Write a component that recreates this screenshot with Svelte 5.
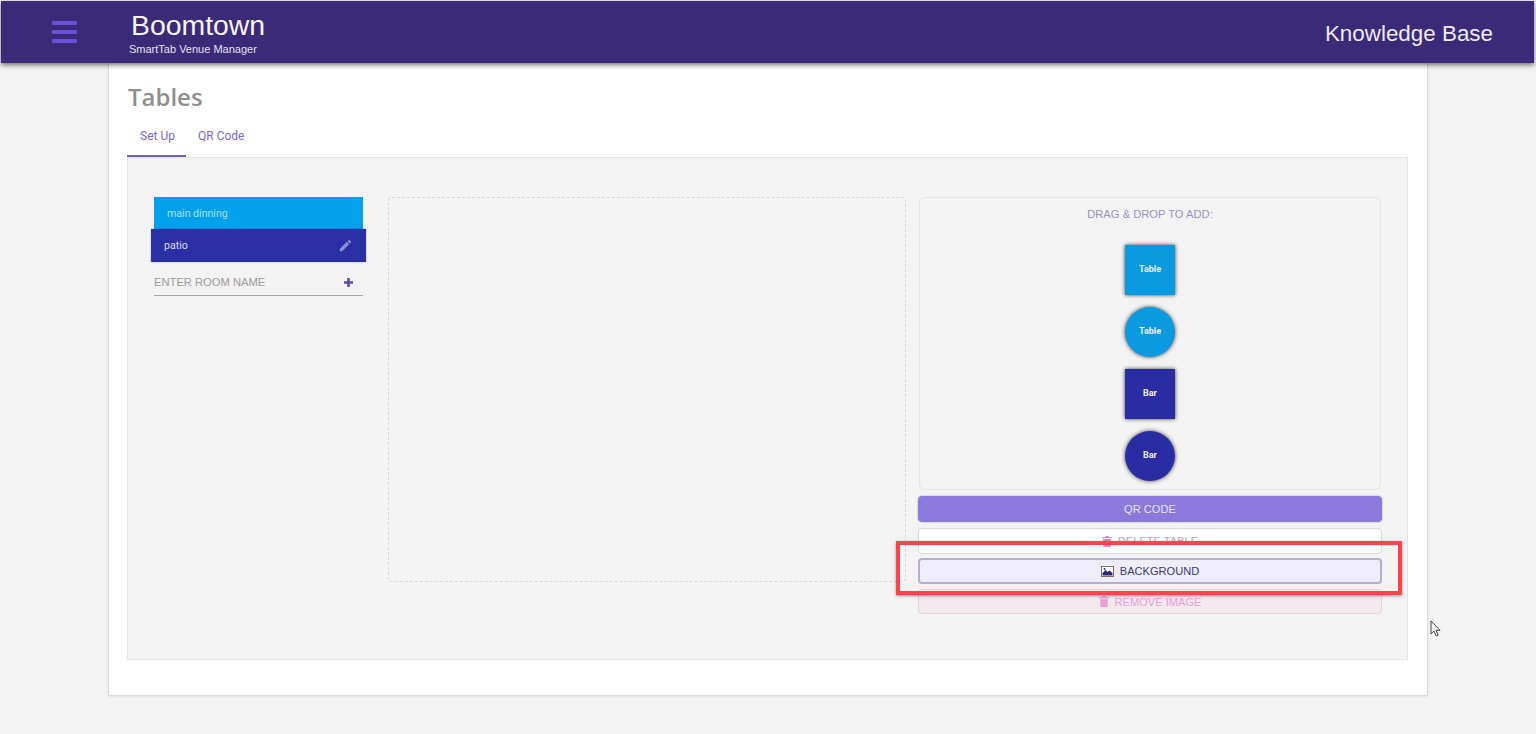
<script>
  const shapes = [
    { label: 'Table', cls: 'table' },
    { label: 'Table', cls: 'table round' },
    { label: 'Bar', cls: 'bar' },
    { label: 'Bar', cls: 'bar round' }
  ];
</script>

<div class="page">
  <header class="topbar">
    <button class="menu" aria-label="Menu"><span></span><span></span><span></span></button>
    <div class="brand">
      <div class="name">Boomtown</div>
      <div class="sub">SmartTab Venue Manager</div>
    </div>
    <div class="kb">Knowledge Base</div>
  </header>

  <main class="card">
    <h1>Tables</h1>
    <nav class="tabs">
      <div class="tab active">Set Up</div>
      <div class="tab">QR Code</div>
    </nav>
    <section class="panel">
      <div class="rooms">
        <div class="room main">main dinning</div>
        <div class="room patio">
          <span>patio</span>
          <svg width="15" height="15" viewBox="0 0 24 24" fill="#8f90d2"><path d="M3 17.25V21h3.75L17.81 9.94l-3.75-3.75L3 17.25zM20.71 7.04a1 1 0 0 0 0-1.41l-2.34-2.34a1 1 0 0 0-1.41 0l-1.83 1.83 3.75 3.75 1.83-1.83z"/></svg>
        </div>
        <div class="add">
          <span>ENTER ROOM NAME</span>
          <svg width="9" height="9" viewBox="0 0 9 9" fill="#5a48b8"><path d="M3.200 0h2.600v3.200H9v2.600H5.800V9H3.200V5.800H0V3.200h3.200z"/></svg>
        </div>
      </div>
      <div class="canvas"></div>
      <div class="side">
        <div class="palette">
          <div class="hint">DRAG &amp; DROP TO ADD:</div>
          <div class="shapes">
            {#each shapes as s}
              <div class="shape {s.cls}"><span>{s.label}</span></div>
            {/each}
          </div>
        </div>
        <button class="btn qr">QR CODE</button>
        <button class="btn del">
          <svg width="10" height="11" viewBox="0 0 10 11" fill="#e58ac6"><path d="M3.500 0h3l.5 1h3v1.200H0V1h3zM1 3h8l-.5 8h-7z"/></svg>
          DELETE TABLE
        </button>
        <button class="btn bg">
          <svg width="13" height="11" viewBox="0 0 13 11"><rect x=".5" y=".5" width="12" height="10" fill="#fff" stroke="#8a6a5a"/><path d="M1.500 9.500V7l3-3 2 2 2-1.500 3 2.500v2.500z" fill="#2c2a70"/><circle cx="3.500" cy="3" r="1" fill="#2c2a70"/></svg>
          BACKGROUND
        </button>
        <button class="btn rem">
          <svg width="10" height="11" viewBox="0 0 10 11" fill="#e9a0d2"><path d="M3.500 0h3l.5 1h3v1.200H0V1h3zM1 3h8l-.5 8h-7z"/></svg>
          REMOVE IMAGE
        </button>
      </div>
    </section>
  </main>

  <div class="highlight"></div>
  <svg class="cursor" width="12" height="17" viewBox="0 0 12 17"><path d="M1 1v13l3-3 2.200 5 2-1-2.200-4.600H10z" fill="#f4f4f4" stroke="#444" stroke-width="1"/></svg>
</div>

<style>
  :global(body) { margin: 0; background: #f3f3f3; }
  .page {
    position: relative;
    height: 734px;
    overflow: hidden;
    background: #f3f3f3;
    font-family: "Liberation Sans", Arial, sans-serif;
  }
  .topbar {
    position: relative;
    z-index: 2;
    box-sizing: border-box;
    height: 62px;
    margin: 1px 2px 0 1px;
    background: #3a2a78;
    box-shadow: 0 2px 5px rgba(0, 0, 0, .55);
    display: flex;
    align-items: center;
    color: #fff;
  }
  .menu {
    display: flex;
    flex-direction: column;
    gap: 5px;
    width: 25px;
    margin-left: 51px;
    padding: 0;
    border: 0;
    background: none;
  }
  .menu span { display: block; height: 4px; border-radius: 1px; background: #6d50d8; }
  .brand { margin-left: 52px; width: 300px; }
  .name { font-size: 28.400px; line-height: 32px; margin-left: 2px; color: #f6f4fb; margin-top: 1px; }
  .sub { font-size: 11px; line-height: 14px; color: #e4e0f0; margin-top: 1px; }
  .kb { margin-left: auto; margin-right: 41px; font-size: 22.400px; color: #eeeaf6; margin-top: 4px; }

  .card {
    box-sizing: border-box;
    width: 1320px;
    height: 633px;
    margin-left: 108px;
    padding: 17px 19px 35px 18px;
    background: #fff;
    border: 1px solid #dcdcdc;
    border-top: 0;
    box-shadow: 0 1px 2px rgba(0, 0, 0, .08);
  }
  h1 {
    margin: 0 0 0 1px;
    font: 600 24px/34px "Open Sans", sans-serif;
    color: #8f8f8b;
  }
  .tabs { display: flex; margin-top: 6px; height: 37px; }
  .tab {
    box-sizing: border-box;
    padding: 9px 12px 0;
    font: 12px/14px Roboto, sans-serif;
    color: #7a68c6;
    white-space: nowrap;
  }
  .tab.active { width: 59px; padding-left: 13px; padding-right: 0; border-bottom: 2px solid #7560cc; }
  .panel {
    box-sizing: border-box;
    display: flex;
    height: 503px;
    padding: 39px 25px 0 23px;
    background: #f3f3f4;
    border: 1px solid #e3e3e3;
  }
  .rooms { width: 215px; flex: none; }
  .room { display: flex; align-items: center; justify-content: space-between; font: 10.600px Roboto, sans-serif; box-sizing: border-box; }
  .room.main { height: 32px; margin: 0 3px; padding-left: 13px; background: #03a0ec; color: #a8e2fa; }
  .room.patio { height: 33px; padding: 0 13px; background: #2a2fa6; color: #dcdcf2; box-shadow: 0 0 1px rgba(20, 20, 90, .6); }
  .add {
    display: flex;
    align-items: center;
    justify-content: space-between;
    box-sizing: border-box;
    height: 34px;
    margin: 0 3px;
    padding: 7px 10px 0 0;
    border-bottom: 1px solid #a8a8a8;
    font: 11.200px "Liberation Sans", sans-serif;
    color: #a09a96;
  }
  .canvas {
    box-sizing: border-box;
    flex: none;
    width: 518px;
    height: 385px;
    margin-left: 22px;
    border: 1px dashed #d5d2ea;
    border-radius: 4px;
  }
  .side { flex: none; width: 464px; margin-left: 12px; display: flex; flex-direction: column; }
  .palette {
    box-sizing: border-box;
    height: 293px;
    margin: 0 1px;
    padding-top: 10px;
    border: 1px solid #e4e4e6;
    border-radius: 6px;
    text-align: center;
  }
  .hint { font-size: 11.200px; line-height: 13px; color: #9a94c0; }
  .shapes { display: flex; flex-direction: column; align-items: center; gap: 12px; margin-top: 23.500px; }
  .shape {
    width: 50px;
    height: 50px;
    display: flex;
    align-items: center;
    justify-content: center;
    font: 700 9px Roboto, sans-serif;
    color: #f0f0fa;
    box-shadow: 0 0 4px rgba(0, 0, 0, .75);
  }
  .shape span { margin-bottom: 1px; }
  .shape.table { background: #0b9ae0; }
  .shape.bar { background: #2a2ca4; }
  .shape.round { border-radius: 50%; }
  .btn {
    box-sizing: border-box;
    display: flex;
    align-items: center;
    justify-content: center;
    gap: 6px;
    width: 464px;
    height: 26px;
    padding: 0;
    border-radius: 4px;
    font: 11.100px "Liberation Sans", sans-serif;
  }
  .qr { margin-top: 6px; background: #8b79dc; border: 1px solid #8b79dc; color: #e8e4f8; box-shadow: 0 0 2px rgba(0, 0, 0, .35); }
  .del { margin-top: 6px; background: #fff; border: 1px solid #d8d8d8; color: #e98acb; }
  .bg { margin-top: 4px; background: #efedfb; border: 2px solid #b4b0d0; color: #3d3a72; }
  .rem { margin-top: 5px; height: 25px; background: #f3e9ef; border: 1px solid #e6d0da; color: #e9a0d6; }

  .highlight {
    position: absolute;
    left: 896px;
    top: 541px;
    width: 506px;
    height: 54px;
    box-sizing: border-box;
    border: 4px solid #f9454b;
    box-shadow: 0 1px 3px rgba(0, 0, 0, .35);
    z-index: 3;
  }
  .cursor { position: absolute; left: 1430px; top: 620px; }
</style>
